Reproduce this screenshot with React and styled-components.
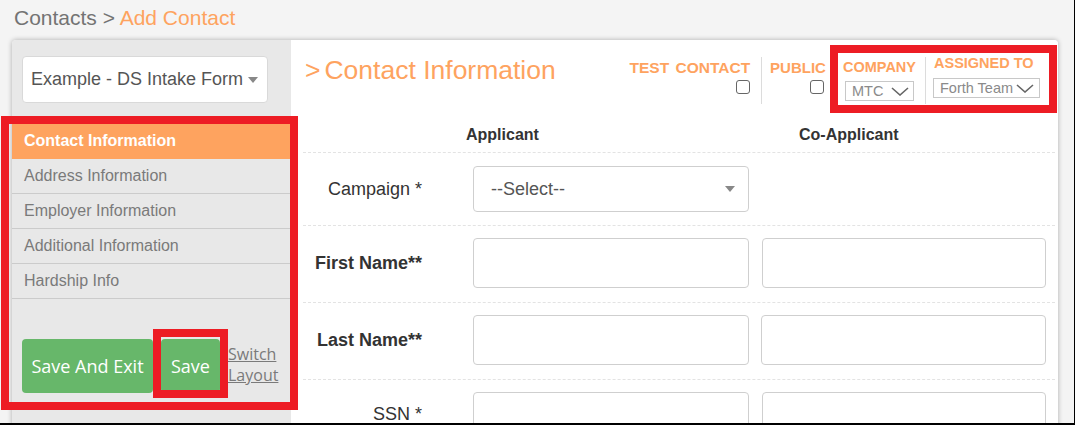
import React from 'react'
import styled, { createGlobalStyle } from 'styled-components'

const ORANGE = '#fea35f'
const GREEN = '#67b76a'

const GlobalStyle = createGlobalStyle`
  html, body {
    margin: 0;
    padding: 0;
    background: #f4f4f4;
    font-family: "Liberation Sans", Arial, sans-serif;
  }
`

const Page = styled.div`
  position: relative;
  width: 1075px;
  height: 425px;
  box-sizing: border-box;
  border-right: 1px solid #000;
  border-bottom: 2px solid #000;
  background: #f4f4f4;
  overflow: hidden;
`

const Breadcrumb = styled.div`
  height: 40px;
  padding-left: 14px;
  font-size: 21px;
  line-height: 35px;
  color: #737373;
  white-space: nowrap;
  span {
    color: ${ORANGE};
  }
`

const Card = styled.div`
  display: flex;
  margin-left: 12px;
  width: 1046px;
  height: 390px;
  border-radius: 4px 4px 0 0;
  box-shadow: 0 0 5px rgba(0, 0, 0, 0.3);
  overflow: hidden;
`

const Sidebar = styled.div`
  width: 279px;
  flex-shrink: 0;
  background: #e8e8e8;
  padding-top: 16px;
  box-sizing: border-box;
`

const FormSelect = styled.div`
  margin-left: 10px;
  width: 246px;
  height: 47px;
  box-sizing: border-box;
  background: #fff;
  border: 1px solid #d9d9d9;
  border-radius: 4px;
  display: flex;
  align-items: center;
  justify-content: space-between;
  padding: 0 9px 0 8px;
  font-size: 18px;
  color: #555;
  white-space: nowrap;
`

const Menu = styled.div`
  margin-top: 21px;
`

const MenuItem = styled.div`
  height: 34px;
  line-height: 34px;
  padding-left: 12px;
  font-size: 16px;
  border-bottom: 1px solid ${({ $active }) => ($active ? ORANGE : '#cbcbcb')};
  background: ${({ $active }) => ($active ? ORANGE : 'transparent')};
  color: ${({ $active }) => ($active ? '#fff' : '#7a7a7a')};
  font-weight: ${({ $active }) => ($active ? 700 : 400)};
`

const Actions = styled.div`
  display: flex;
  align-items: center;
  gap: 8px;
  margin-top: 40px;
  padding-left: 10px;
`

const GreenButton = styled.button`
  width: ${({ $w }) => $w}px;
  height: 54px;
  border: none;
  border-radius: 4px;
  background: ${GREEN};
  color: #fff;
  font-family: "Open Sans", sans-serif;
  font-size: 18px;
  padding: 0;
  white-space: nowrap;
`

const SwitchLink = styled.a`
  font-family: "Open Sans", sans-serif;
  font-size: 16px;
  line-height: 21px;
  color: #7a7a7a;
  text-decoration: underline;
  margin-top: -2px;
`

const Main = styled.div`
  flex: 1;
  background: #fff;
  padding: 0 3px 0 12px;
`

const TopBar = styled.div`
  display: flex;
  align-items: flex-start;
  height: 78px;
`

const Title = styled.div`
  margin-top: 15px;
  padding-left: 2px;
  font-size: 26.5px;
  line-height: 30px;
  color: ${ORANGE};
  white-space: nowrap;
  b {
    font-weight: 400;
    margin-right: 4px;
  }
`

const Controls = styled.div`
  margin-left: auto;
  margin-top: 17px;
  display: flex;
`

const Group = styled.div`
  height: 47px;
  display: flex;
  flex-direction: column;
  align-items: ${({ $right }) => ($right ? 'flex-end' : 'flex-start')};
  padding: 0 ${({ $pr }) => $pr}px 0 ${({ $pl }) => $pl}px;
  border-right: ${({ $divider }) => ($divider ? '1px solid #dcdcdc' : 'none')};
`

const GroupLabel = styled.div`
  margin-top: ${({ $mt }) => $mt}px;
  font-size: ${({ $fs }) => $fs || 15}px;
  line-height: 17px;
  font-weight: 700;
  color: ${ORANGE};
  white-space: nowrap;
  word-spacing: ${({ $ws }) => $ws || 0}px;
`

const Checkbox = styled.span`
  display: block;
  margin-top: 4px;
  margin-right: ${({ $mr }) => $mr || 0}px;
  width: 14px;
  height: 14px;
  box-sizing: border-box;
  border: 1px solid #666;
  border-radius: 3px;
  background: #fff;
`

const MiniSelect = styled.div`
  margin-top: ${({ $mt }) => $mt}px;
  margin-left: ${({ $ml }) => $ml || 0}px;
  width: ${({ $w }) => $w}px;
  height: 20px;
  box-sizing: border-box;
  border: 1px solid #c8c8c8;
  display: flex;
  align-items: center;
  justify-content: space-between;
  padding: 0 4px 0 6px;
  font-size: 14.5px;
  color: #8a8a8a;
  white-space: nowrap;
`

const ColumnHeads = styled.div`
  display: flex;
  height: 34px;
  line-height: 34px;
  font-size: 16px;
  font-weight: 700;
  color: #333;
  border-bottom: 1px dashed #e3e3e3;
`

const ColumnHead = styled.div`
  width: ${({ $w }) => $w}px;
  padding-left: ${({ $pl }) => $pl}px;
  box-sizing: border-box;
`

const Row = styled.div`
  display: grid;
  grid-template-columns: 157px 276px 284px;
  column-gap: 13px;
  align-items: center;
  padding: ${({ $pad }) => $pad || '12px 0 14px'};
  border-bottom: 1px dashed #e3e3e3;
`

const Label = styled.div`
  text-align: right;
  padding-right: 38px;
  font-size: 18px;
  font-weight: ${({ $bold }) => ($bold ? 700 : 400)};
  color: #333;
  white-space: nowrap;
  margin-top: ${({ $mt }) => $mt || 0}px;
`

const Input = styled.div`
  height: 50px;
  box-sizing: border-box;
  border: 1px solid #cfcfcf;
  border-radius: 4px;
  background: #fff;
  margin-left: ${({ $ml }) => $ml || 0}px;
`

const SelectInput = styled.div`
  height: 46px;
  box-sizing: border-box;
  border: 1px solid #cfcfcf;
  border-radius: 4px;
  background: #fff;
  display: flex;
  align-items: center;
  justify-content: space-between;
  padding: 0 13px 0 17px;
  font-size: 18px;
  color: #555;
`

const RedBox = styled.div`
  position: absolute;
  left: ${({ $x }) => $x}px;
  top: ${({ $y }) => $y}px;
  width: ${({ $w }) => $w}px;
  height: ${({ $h }) => $h}px;
  box-sizing: border-box;
  border: 8px solid #ed1c24;
  pointer-events: none;
`

const Caret = ({ color = '#777', size = 9 }) => (
  <svg width={size} height={size * 0.6} viewBox="0 0 10 6">
    <path d="M0 0 L10 0 L5 6 Z" fill={color} />
  </svg>
)

const Chevron = ({ w = 18 }) => (
  <svg width={w} height="9" viewBox="0 0 18 9">
    <polyline points="1,1 9,8 17,1" fill="none" stroke="#666" strokeWidth="1.6" />
  </svg>
)

const menuItems = ['Address Information', 'Employer Information', 'Additional Information', 'Hardship Info']

export default function App() {
  return (
    <>
      <GlobalStyle />
      <Page>
        <Breadcrumb>
          Contacts &gt; <span>Add Contact</span>
        </Breadcrumb>
        <Card>
          <Sidebar>
            <FormSelect>
              Example - DS Intake Form
              <Caret color="#888" size={10} />
            </FormSelect>
            <Menu>
              <MenuItem $active>Contact Information</MenuItem>
              {menuItems.map((m) => (
                <MenuItem key={m}>{m}</MenuItem>
              ))}
            </Menu>
            <Actions>
              <GreenButton $w={131}>Save And Exit</GreenButton>
              <GreenButton $w={59}>Save</GreenButton>
              <SwitchLink>
                Switch
                <br />
                Layout
              </SwitchLink>
            </Actions>
          </Sidebar>

          <Main>
            <TopBar>
              <Title>
                <b>&gt;</b>Contact Information
              </Title>
              <Controls>
                <Group $right $pl={0} $pr={11} $divider>
                  <GroupLabel $mt={2} $fs={15.5} $ws={2}>TEST CONTACT</GroupLabel>
                  <Checkbox />
                </Group>
                <Group $right $pl={8} $pr={17}>
                  <GroupLabel $mt={2}>PUBLIC</GroupLabel>
                  <Checkbox $mr={2} />
                </Group>
                <Group $pl={0} $pr={9} $divider>
                  <GroupLabel $mt={2} $fs={14.5}>COMPANY</GroupLabel>
                  <MiniSelect $mt={5} $ml={2} $w={69}>
                    MTC
                    <Chevron />
                  </MiniSelect>
                </Group>
                <Group $pl={8} $pr={15}>
                  <GroupLabel $mt={-2} $fs={14.5}>ASSIGNED TO</GroupLabel>
                  <MiniSelect $mt={6} $ml={-1} $w={107}>
                    Forth Team
                    <Chevron w={20} />
                  </MiniSelect>
                </Group>
              </Controls>
            </TopBar>

            <ColumnHeads>
              <ColumnHead $w={496} $pl={163}>Applicant</ColumnHead>
              <ColumnHead $w={240} $pl={0}>Co-Applicant</ColumnHead>
            </ColumnHeads>

            <Row $pad="13px 0 13px">
              <Label>Campaign *</Label>
              <SelectInput>
                --Select--
                <Caret color="#888" size={10} />
              </SelectInput>
            </Row>
            <Row>
              <Label $bold>First Name**</Label>
              <Input />
              <Input />
            </Row>
            <Row>
              <Label $bold>Last Name**</Label>
              <Input />
              <Input $ml={-1} />
            </Row>
            <Row>
              <Label $mt={-6}>SSN *</Label>
              <Input />
              <Input />
            </Row>
          </Main>
        </Card>

        <RedBox $x={1} $y={116} $w={297} $h={294} />
        <RedBox $x={153} $y={329} $w={75} $h={69} />
        <RedBox $x={830} $y={45} $w={227} $h={68} />
      </Page>
    </>
  )
}
